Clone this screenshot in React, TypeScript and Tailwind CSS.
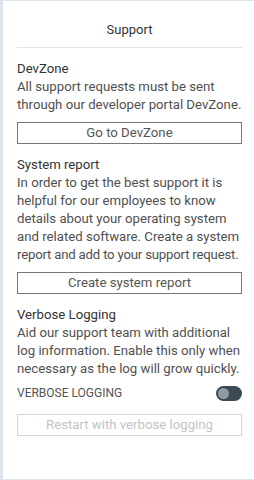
const body = "text-[13.2px] leading-[18px] whitespace-nowrap";

export default function App() {
  return (
    <div
      className="w-[254px] h-[480px] bg-white border-l-[3px] border-t border-b border-[#dde4ea] text-[#505050] overflow-hidden"
      style={{ fontFamily: "Roboto, 'Noto Sans', sans-serif" }}
    >
      <div className="pl-[14px] pr-[12px]">
        <div className="h-[47px] border-b border-[#e3e3e3] flex items-center justify-center pt-[12px] text-[13px] text-[#333]">
          Support
        </div>
        <div className="pt-[12px]">
          <div className="text-[13.2px] leading-[18px] text-[#333]">DevZone</div>
          <div className={body}>
            All support requests must be sent
            <br />
            through our developer portal DevZone.
          </div>
          <button className="mt-[8px] w-full h-[22px] border border-[#777] text-[13.2px] leading-[18px] text-[#555] flex items-center justify-center">
            Go to DevZone
          </button>
        </div>
        <div className="pt-[12px]">
          <div className="text-[13.2px] leading-[18px] text-[#333]">System report</div>
          <div className={body}>
            In order to get the best support it is
            <br />
            helpful for our employees to know
            <br />
            details about your operating system
            <br />
            and related software. Create a system
            <br />
            <span className="tracking-[-0.2px]">report and add to your support request.</span>
          </div>
          <button className="mt-[8px] w-full h-[22px] border border-[#777] text-[13.2px] leading-[18px] text-[#555] flex items-center justify-center">
            Create system report
          </button>
        </div>
        <div className="pt-[12px]">
          <div className="text-[13.2px] leading-[18px] text-[#333]">Verbose Logging</div>
          <div className={body}>
            Aid our support team with additional
            <br />
            log information. Enable this only when
            <br />
            necessary as the log will grow quickly.
          </div>
          <div className="mt-[6px] flex items-center justify-between">
            <span className="text-[12px] text-[#555]">VERBOSE LOGGING</span>
            <span className="w-[26px] h-[15px] rounded-full bg-[#3b4a54] flex items-center px-[2px]">
              <span className="w-[11px] h-[11px] rounded-full bg-[#8c9ba5]" />
            </span>
          </div>
          <button className="mt-[12px] w-full h-[22px] border border-[#d6d6d6] text-[13.2px] leading-[18px] text-[#c4c4c4] flex items-center justify-center">
            Restart with verbose logging
          </button>
        </div>
      </div>
    </div>
  );
}
